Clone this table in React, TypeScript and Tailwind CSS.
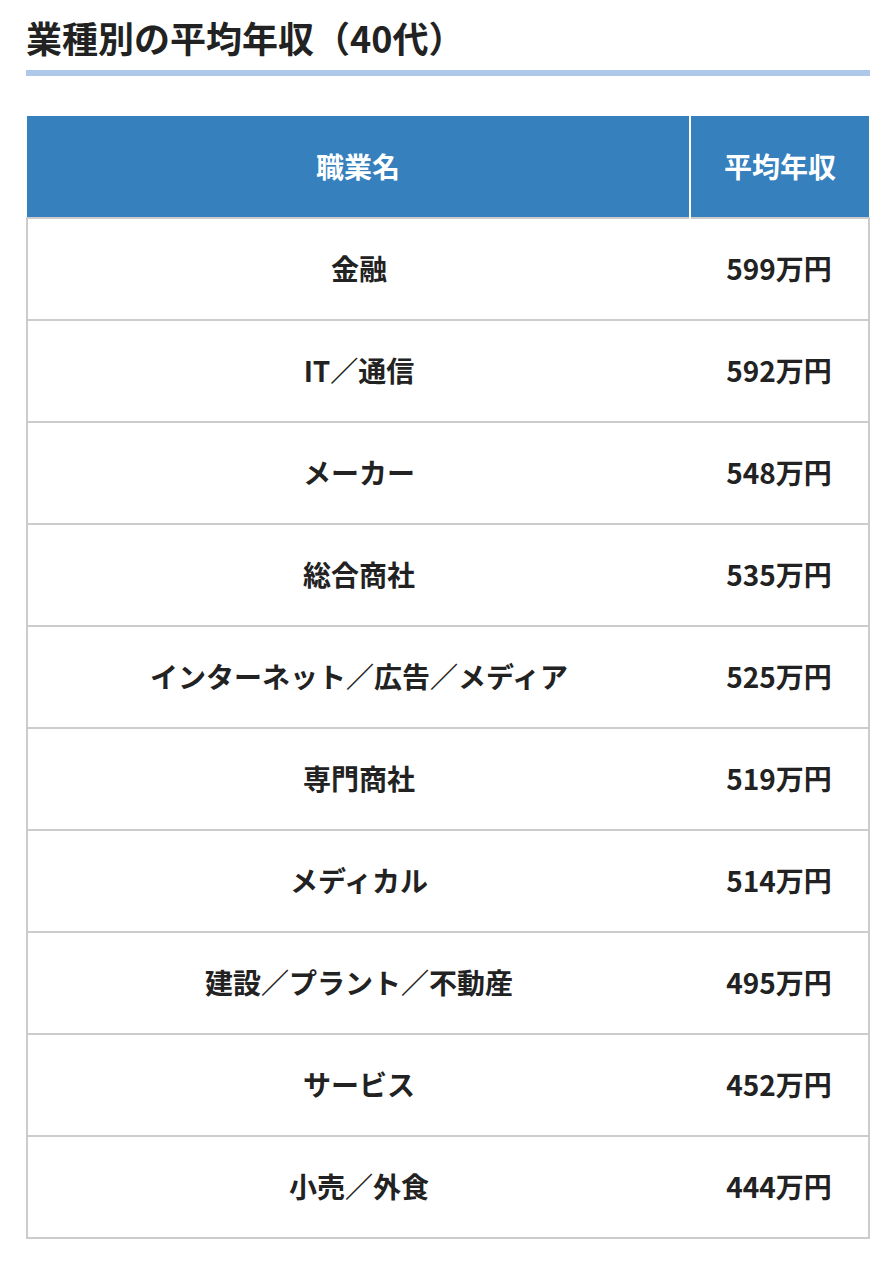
const ROWS: { name: string; salary: string }[] = [
  { name: '金融', salary: '599万円' },
  { name: 'IT／通信', salary: '592万円' },
  { name: 'メーカー', salary: '548万円' },
  { name: '総合商社', salary: '535万円' },
  { name: 'インターネット／広告／メディア', salary: '525万円' },
  { name: '専門商社', salary: '519万円' },
  { name: 'メディカル', salary: '514万円' },
  { name: '建設／プラント／不動産', salary: '495万円' },
  { name: 'サービス', salary: '452万円' },
  { name: '小売／外食', salary: '444万円' },
];

export default function App() {
  return (
    <div
      className="min-h-[1266px] bg-white pt-[13px] pr-[18px] pl-[26px] text-[#222]"
      style={{ fontFamily: '"Noto Sans CJK JP", "Noto Sans", sans-serif' }}
    >
      {/* Heading */}
      <h2 className="border-b-[6px] border-[#aec8ea] pb-[9px] text-[36px] leading-[48px] font-bold">
        業種別の平均年収（40代）
      </h2>

      {/* Table */}
      <table className="mt-[40px] w-full border-collapse text-[28px] font-bold">
        <thead>
          <tr className="h-[102px] bg-[#3580bd] text-white">
            <th className="w-[663px] border-r-2 border-white pb-[2px]">職業名</th>
            <th className="pb-[2px]">平均年収</th>
          </tr>
        </thead>
        <tbody>
          {ROWS.map((row) => (
            <tr key={row.name} className="h-[102px]">
              <td className="border-y-2 border-l-2 border-[#cccccc] pb-[3px] text-center">{row.name}</td>
              <td className="border-y-2 border-r-2 border-[#cccccc] pb-[3px] text-center">{row.salary}</td>
            </tr>
          ))}
        </tbody>
      </table>
    </div>
  );
}
